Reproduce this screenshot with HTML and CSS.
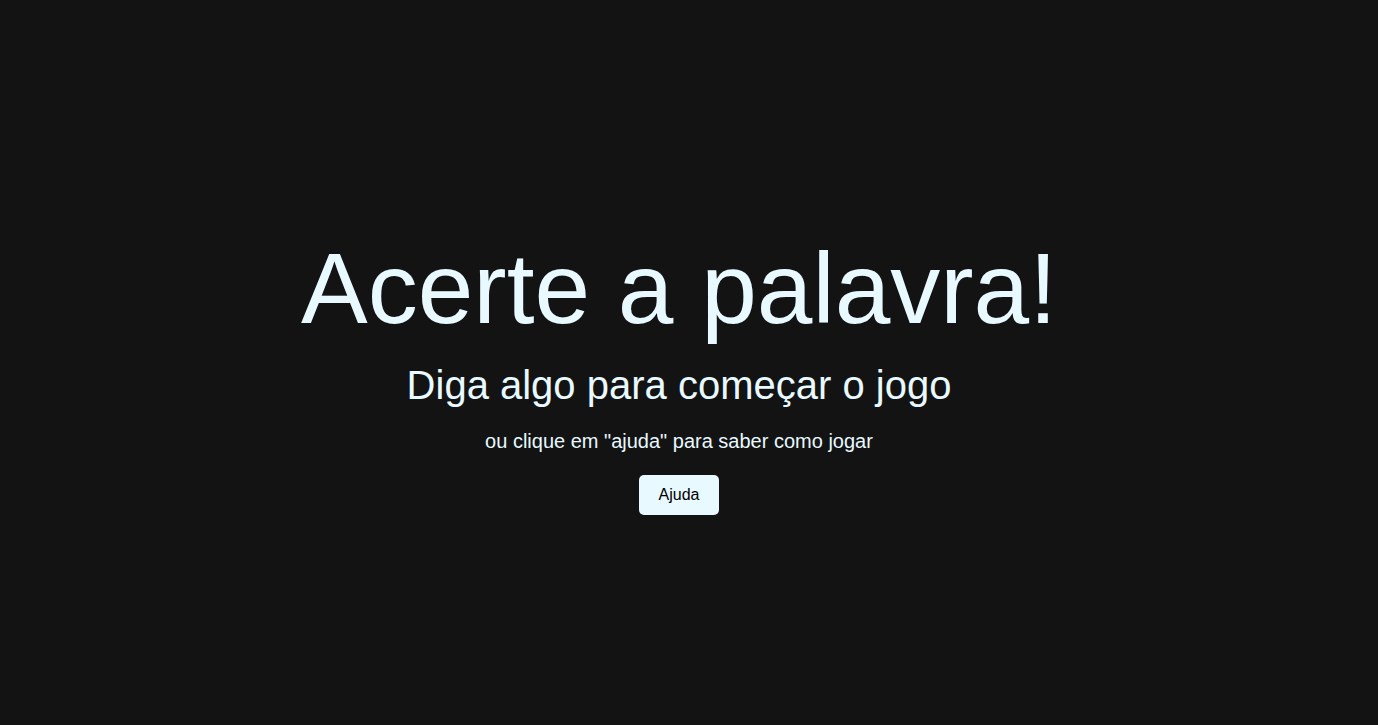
FILE: index.html
```html
<!DOCTYPE html>
<html lang="pt">
<head>
<meta charset="utf-8">
<title>Acerte a palavra!</title>
<link rel="stylesheet" href="styles.css">
</head>
<body>
<main class="screen">
  <h1 class="title">Acerte a palavra!</h1>
  <h2 class="subtitle">Diga algo para começar o jogo</h2>
  <p class="hint">ou clique em "ajuda" para saber como jogar</p>
  <button class="help-btn">Ajuda</button>
</main>
</body>
</html>
```

FILE: styles.css
```css
html, body {
  margin: 0;
  padding: 0;
  height: 100%;
}
body {
  background: #131313;
  color: #e8f9ff;
  font-family: "Liberation Sans", Arial, sans-serif;
}
.screen {
  box-sizing: border-box;
  height: 100vh;
  padding: 20px 20px 0 0;
  display: flex;
  flex-direction: column;
  align-items: center;
  justify-content: center;
  text-align: center;
}
.title {
  margin: 0;
  font-size: 100px;
  font-weight: normal;
  line-height: 1.15;
}
.subtitle {
  margin: 16px 0 0;
  font-size: 40px;
  font-weight: normal;
  line-height: 1.15;
}
.hint {
  margin: 22px 0 0;
  font-size: 20px;
  line-height: 1.15;
}
.help-btn {
  margin-top: 22px;
  width: 80px;
  height: 40px;
  border: none;
  border-radius: 5px;
  background: #e8f9ff;
  color: #000;
  font-family: "Liberation Sans", Arial, sans-serif;
  font-size: 16px;
}
```
